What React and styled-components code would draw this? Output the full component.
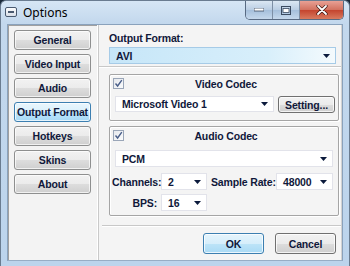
import styled, { createGlobalStyle } from "styled-components";

const GlobalStyle = createGlobalStyle`
  html, body { margin: 0; padding: 0; }
  body { width: 350px; height: 266px; overflow: hidden; background: #1b2a3a; }
`;

const navItems = ["General", "Video Input", "Audio", "Output Format", "Hotkeys", "Skins", "About"];

function Arrow() {
  return (
    <svg width="7" height="4" viewBox="0 0 7 4">
      <path d="M0 0 H7 L3.5 4 Z" fill="#0b1a3c" />
    </svg>
  );
}

function Combo({ value, width, height = 17, active }) {
  return (
    <ComboBox $width={width} $height={height} $active={active}>
      <span>{value}</span>
      <Arrow />
    </ComboBox>
  );
}

function Check() {
  return (
    <CheckBox>
      <svg width="9" height="9" viewBox="0 0 9 9">
        <path d="M1.5 4.5 L3.6 7 L7.8 1.2" stroke="#4a5f8a" strokeWidth="1.4" fill="none" />
      </svg>
    </CheckBox>
  );
}

export default function App() {
  return (
    <>
      <GlobalStyle />
      <Window>
        <TitleBar>
          <SysIcon />
          <Title>Options</Title>
          <Controls>
            <CtrlButton>
              <svg width="10" height="4"><rect x="0" y="0" width="10" height="3" fill="#fff" stroke="#3a4a60" strokeWidth="0.8" /></svg>
            </CtrlButton>
            <CtrlButton>
              <svg width="10" height="9"><rect x="0.5" y="0.5" width="9" height="8" fill="none" stroke="#3a4a60" strokeWidth="1" /><rect x="2" y="2.5" width="6" height="4" fill="#fff" stroke="#3a4a60" strokeWidth="0.8" /></svg>
            </CtrlButton>
            <CloseButton>
              <svg width="12" height="10" viewBox="0 0 12 10">
                <path d="M2 1 L10 9 M10 1 L2 9" stroke="#3b1510" strokeWidth="3.2" strokeLinecap="round" />
                <path d="M2 1 L10 9 M10 1 L2 9" stroke="#fff" strokeWidth="1.8" strokeLinecap="round" />
              </svg>
            </CloseButton>
          </Controls>
        </TitleBar>
        <Client>
          <Nav>
            {navItems.map((item) => (
              <NavButton key={item} $active={item === "Output Format"}>
                {item}
              </NavButton>
            ))}
          </Nav>
          <Panel>
            <Label>Output Format:</Label>
            <Combo value="AVI" width={227} active />
            <Separator />
            <Group $height={47}>
              <GroupHead>
                <Check />
                <GroupTitle>Video Codec</GroupTitle>
              </GroupHead>
              <Row $top={6}>
                <Combo value="Microsoft Video 1" width={159} height={16} />
                <PushButton $width={57} $height={17}>Setting...</PushButton>
              </Row>
            </Group>
            <Group $height={90}>
              <GroupHead>
                <Check />
                <GroupTitle>Audio Codec</GroupTitle>
              </GroupHead>
              <Row $top={8}>
                <Combo value="PCM" width={218} />
              </Row>
              <FieldGrid>
                <FieldLabel>Channels:</FieldLabel>
                <Combo value="2" width={46} />
                <FieldLabel>Sample Rate:</FieldLabel>
                <Combo value="48000" width={57} />
                <FieldLabel>BPS:</FieldLabel>
                <Combo value="16" width={46} />
              </FieldGrid>
            </Group>
            <BottomLine />
            <Buttons>
              <PushButton $width={61} $height={21} $primary>OK</PushButton>
              <PushButton $width={61} $height={21}>Cancel</PushButton>
            </Buttons>
          </Panel>
        </Client>
      </Window>
    </>
  );
}

const font = `"Liberation Sans", Arial, sans-serif`;
const textStyle = `
  font-family: ${font};
  font-weight: bold;
  font-size: 10.5px;
  letter-spacing: -0.15px;
  color: #10183a;
`;

const Window = styled.div`
  position: relative;
  width: 350px;
  height: 266px;
  box-sizing: border-box;
  border-radius: 6px 6px 0 0;
  border: 1px solid #6a7c90;
  border-bottom: none;
  background: linear-gradient(#d6e6f5 0px, #c3d8ed 22px, #bcd4ec 100%);
  display: flex;
  flex-direction: column;
  overflow: hidden;
`;

const TitleBar = styled.div`
  height: 22px;
  display: flex;
  align-items: flex-start;
  padding-left: 4px;
`;

const SysIcon = styled.div`
  width: 10px;
  height: 8px;
  margin-top: 6px;
  border: 1px solid #4a5a70;
  border-radius: 2px;
  background: linear-gradient(#fdfdfd, #d8dfe8);
  position: relative;
  &::after {
    content: "";
    position: absolute;
    left: 2px;
    top: 3px;
    width: 6px;
    height: 2px;
    background: #4a5a70;
  }
`;

const Title = styled.div`
  font-family: "Noto Sans", "Open Sans", sans-serif;
  font-size: 12px;
  color: #000;
  margin-left: 6px;
  margin-top: 3px;
`;

const Controls = styled.div`
  margin-left: auto;
  margin-right: 5px;
  display: flex;
  height: 18px;
  border: 1px solid #586a82;
  border-top: none;
  border-radius: 0 0 5px 5px;
  overflow: hidden;
`;

const CtrlButton = styled.div`
  width: 26px;
  display: flex;
  align-items: center;
  justify-content: center;
  background: linear-gradient(#dbe7f3, #b9cde3 50%, #a5bfdb 51%, #c5d8ec);
  border-right: 1px solid #7d8fa5;
`;

const CloseButton = styled.div`
  width: 43px;
  display: flex;
  align-items: center;
  justify-content: center;
  background: linear-gradient(#e8a195, #d2705e 50%, #c4442e 51%, #d87a5e);
`;

const Client = styled.div`
  margin: 1px 6px 0 6px;
  height: 235px;
  display: flex;
  background: #f0f0f0;
  border: 1px solid #8aa2bc;
  border-bottom: 1px solid #97adc5;
`;

const Nav = styled.div`
  width: 91px;
  box-sizing: border-box;
  display: flex;
  flex-direction: column;
  gap: 4px;
  padding: 5px 0 0 6px;
  background: #f3f3f3;
  border-right: 1px solid #c9c9c9;
  box-shadow: inset -1px 0 0 #ffffff, inset 1px 1px 0 #a0a0a0;
`;

const NavButton = styled.div`
  width: 77px;
  height: 20px;
  box-sizing: border-box;
  border-radius: 3px;
  border: 1px solid ${(p) => (p.$active ? "#3c7fb1" : "#8e8f8f")};
  background: ${(p) =>
    p.$active
      ? "linear-gradient(#e9f6fd 0%, #d9f0fc 50%, #bee6fd 51%, #a7d9f5 100%)"
      : "linear-gradient(#f2f2f2 0%, #ebebeb 50%, #dddddd 51%, #cfcfcf 100%)"};
  box-shadow: inset 0 0 0 1px rgba(255, 255, 255, 0.7);
  ${textStyle}
  display: flex;
  align-items: center;
  justify-content: center;
  white-space: nowrap;
`;

const Panel = styled.div`
  flex: 1;
  padding: 7px 0 0 10px;
  display: flex;
  flex-direction: column;
  background: #f4f4f4;
  border-right: 1px solid #d2d2d2;
`;

const Label = styled.div`
  ${textStyle}
  line-height: 12px;
  margin-bottom: 3px;
`;

const ComboBox = styled.div`
  width: ${(p) => p.$width}px;
  height: ${(p) => p.$height}px;
  box-sizing: border-box;
  flex: none;
  display: flex;
  align-items: center;
  justify-content: space-between;
  padding: 0 5px;
  border: 1px solid ${(p) => (p.$active ? "#a6cbe7" : "#e2e3ea")};
  background: ${(p) =>
    p.$active ? "linear-gradient(90deg, #c6e6f8 0%, #d8effb 70%, #f4fafd 100%)" : "#ffffff"};
  ${textStyle}
  span { padding-left: 1px; }
`;

const Separator = styled.div`
  height: 1px;
  background: #c8c8c8;
  border-bottom: 1px solid #fff;
  margin: 2px 0 6px -10px;
`;

const Group = styled.div`
  width: 230px;
  box-sizing: border-box;
  height: ${(p) => p.$height}px;
  border: 1px solid #a5a5a5;
  border-radius: 2px;
  box-shadow: inset 1px 1px 0 #fff, 1px 1px 0 #fff;
  margin-bottom: 5px;
  padding: 2px 0 0 2px;
`;

const GroupHead = styled.div`
  display: flex;
  align-items: center;
  height: 13px;
`;

const CheckBox = styled.div`
  width: 11px;
  height: 11px;
  margin-left: 1px;
  box-sizing: border-box;
  border: 1px solid #9aa6b8;
  background: linear-gradient(135deg, #e6e9ee, #fafbfc);
  display: flex;
  align-items: center;
  justify-content: center;
`;

const GroupTitle = styled.div`
  flex: 1;
  text-align: center;
  ${textStyle}
  padding-right: 10px;
`;

const Row = styled.div`
  display: flex;
  align-items: flex-start;
  gap: 4px;
  margin-top: ${(p) => p.$top}px;
  padding-left: 3px;
`;

const PushButton = styled.div`
  width: ${(p) => p.$width}px;
  height: ${(p) => p.$height}px;
  box-sizing: border-box;
  border-radius: 3px;
  border: 1px solid ${(p) => (p.$primary ? "#3c7fb1" : "#707070")};
  background: ${(p) =>
    p.$primary
      ? "linear-gradient(#e5f4fc 0%, #d6eefb 50%, #bde4f8 51%, #a9daf5 100%)"
      : "linear-gradient(#f2f2f2 0%, #ebebeb 50%, #dddddd 51%, #cfcfcf 100%)"};
  box-shadow: inset 0 0 0 1px rgba(255, 255, 255, 0.75);
  ${textStyle}
  display: flex;
  align-items: center;
  justify-content: center;
`;

const FieldGrid = styled.div`
  display: grid;
  grid-template-columns: 45px 46px 61px 57px;
  column-gap: 4px;
  row-gap: 4px;
  margin-top: 6px;
  align-items: center;
`;

const FieldLabel = styled.div`
  ${textStyle}
  text-align: right;
  white-space: nowrap;
`;

const BottomLine = styled.div`
  height: 1px;
  background: #c8c8c8;
  border-bottom: 1px solid #fff;
  margin: 4px 0 0 -7px;
`;

const Buttons = styled.div`
  display: flex;
  gap: 11px;
  justify-content: flex-end;
  padding-right: 5px;
  margin-top: 6px;
`;
